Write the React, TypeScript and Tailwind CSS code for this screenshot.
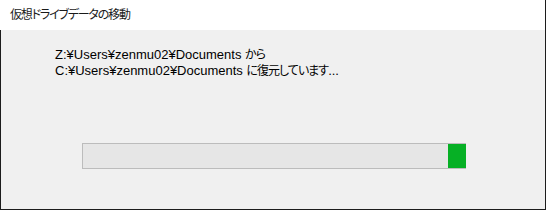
export default function App() {
  return (
    <div className="w-[546px] h-[210px] flex flex-col bg-[#f0f0f0] border-r border-b border-[#1c1c1c] [font-family:'Liberation_Sans','Noto_Sans_CJK_JP',sans-serif] [font-feature-settings:'palt']">
      <div className="h-[30px] shrink-0 bg-white flex items-center pl-[10px] text-[12px] tracking-[-1.2px] text-[#1a1a1a]">
        仮想ドライブデータの移動
      </div>
      <div className="flex-1 border-l border-[#1c1c1c] pl-[54px] pt-[17px]">
        <div className="text-[13px] leading-[15px] text-black">
          <div>
            Z:¥Users¥zenmu02¥Documents <span className="text-[12px] tracking-[-1px]">から</span>
          </div>
          <div>
            C:¥Users¥zenmu02¥Documents <span className="text-[12px] tracking-[-1px]">に復元しています</span>...
          </div>
        </div>
        <div className="ml-[27px] mt-[64px] w-[384px] h-[26px] flex border border-r-0 border-[#bcbcbc] bg-[#e6e6e6]">
          <div className="flex-1" />
          <div className="w-[18px] -my-px bg-[#06b025] border-y border-[#bcbcbc]" />
        </div>
      </div>
    </div>
  );
}
